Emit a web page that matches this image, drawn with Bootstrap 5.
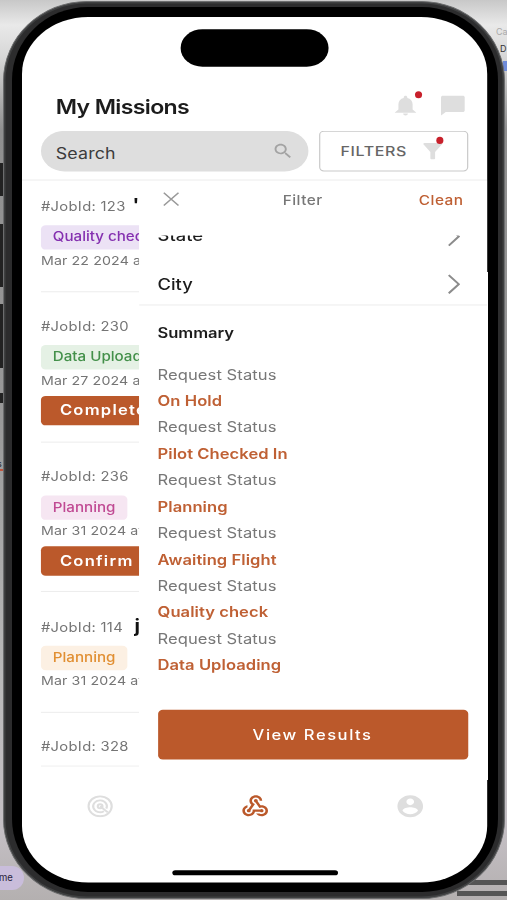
<!DOCTYPE html>
<html lang="en">
<head>
<meta charset="utf-8">
<meta name="viewport" content="width=device-width, initial-scale=1">
<title>My Missions</title>
<link href="https://cdn.jsdelivr.net/npm/bootstrap@5.3.0/dist/css/bootstrap.min.css" rel="stylesheet">
<style>
  body { width: 507px; height: 900px; overflow: hidden; font-family: Inter, "Liberation Sans", sans-serif; background: #a8a8a9; }
  svg { display: block; }
  /* desktop behind the phone */
  .desk { inset: 0; z-index: 0; background: linear-gradient(#c8c8c8 0, #e9e9e9 25px, #d5d5d5 60px, #8f8f8f 130px, #999 420px, #b9b9b9 680px, #c4bfc4 830px, #b4b0b0 900px); }
  .desk > * { position: absolute; }
  .blk { left: 0; width: 4px; background: #222; }
  .stripe { right: 0; width: 50px; height: 5px; background: #555; }
  .tagpill { left: -20px; top: 866px; width: 44px; height: 24px; border-radius: 12px; background: #c9bddb; color: #2c2540; font-size: 9.5px; line-height: 24px; padding-left: 19px; }
  .peek { font-size: 9px; line-height: 12px; }
  /* phone body */
  .shell { z-index: 1; width: 502px; height: 898px; margin: 1px 0 0 3px; padding: 5px 6px 6px 8px; border-radius: 84px / 80px; background: #2c2c2d; border: 1px solid #6c6d6e; box-shadow: inset 0 0 0 1.5px #3f4041; }
  .bezel { height: 100%; padding: 10px 0 0 10px; border-radius: 76px / 73px; background: #000; }
  /* 393x852 point screen stretched onto the phone */
  .screen { width: 393px; height: 852px; transform: scale(1.1837, 1.0158); transform-origin: 0 0; border-radius: 56px; background: #fff; overflow: hidden; position: relative; color: #1c1c1c; }
  .island { position: absolute; left: 134px; top: 11.5px; width: 125px; height: 37px; border-radius: 19px; background: #000; }
  .top-area { height: 160.5px; padding: 74px 16px 0; border-bottom: 1.5px solid #ececec; flex: none; }
  .title-row { height: 38px; padding: 0 1px 0 12.5px; }
  .title { font-size: 19.5px; font-weight: 600; line-height: 29px; letter-spacing: -.55px; }
  .search { width: 226px; height: 39.5px; border-radius: 20px; background: #dedede; color: #3b3b3b; font-size: 15px; padding: 4px 12px 0 12.5px; }
  .search span { letter-spacing: .15px; padding-top: 2px; }
  .filters { width: 126px; height: 39.5px; border: 1px solid #c9c9c9; border-radius: 4px; background: #fff; color: #666; font-size: 13.5px; font-weight: 500; letter-spacing: .55px; padding: 0 17px 0 17px; }
  .dot { position: absolute; width: 6px; height: 7px; border-radius: 50%; background: #c8202b; }
  .main-area { height: 577px; flex: none; overflow: hidden; }
  .jobs { width: 98.5px; padding-left: 16px; overflow: hidden; white-space: nowrap; margin-top: -8px; flex: none; }
  .job { border-bottom: 1.5px solid #ececec; padding-top: 24.3px; height: 118.3px; }
  .job.tall { height: 147.8px; }
  .jobid { font-size: 12.5px; line-height: 20px; height: 20px; color: #757575; letter-spacing: .25px; }
  .jobname { display: inline-block; line-height: 16px; vertical-align: baseline; color: #111; font-weight: 700; font-size: 17px; margin-left: 2px; }
  .state { display: table; margin-top: 8.3px; height: 24px; line-height: 24px; padding: 0 10px; border-radius: 4px; font-size: 12.8px; font-weight: 500; }
  .when { font-size: 12px; line-height: 21px; color: #757575; letter-spacing: .1px; }
  .act { display: block; width: 150px; height: 29px; margin-top: 4.5px; padding: 0 0 0 16px; border: 0; border-radius: 4px; background: #bb592b; color: #fff; font-size: 14px; line-height: 28px; font-weight: 600; letter-spacing: 1.05px; text-align: left; }
  .st-purple { background: #ece2f5; color: #8531b0; }
  .st-green { background: #e5f1e5; color: #43904a; }
  .st-pink { background: #f6e6f2; color: #c04a93; }
  .st-amber { background: #fcf0e3; color: #e18f33; }
  .panel { flex: 1; min-width: 0; background: #fff; }
  .panel-head { height: 54.3px; padding: 8.5px 20px 0 20.5px; font-size: 13px; font-weight: 500; letter-spacing: .4px; }
  .panel-head > * { height: 23px; line-height: 23px; }
  .orange { color: #bf6034; }
  .panel-scroll { height: 69.200px; overflow: hidden; border-bottom: 1.5px solid #ececec; }
  .opt { height: 47.5px; padding: 0 23.5px 0 16px; font-size: 15.5px; font-weight: 500; color: #1c1c1c; }
  .opt svg { margin-top: -1px; }
  .opt:first-child { margin-top: -22.5px; }
  .summary { padding: 15.5px 16px 0; font-size: 14px; line-height: 26px; color: #777; }
  .summary h2 { font-size: 14px; line-height: 24px; font-weight: 600; color: #1c1c1c; margin: 0 0 15.8px; letter-spacing: -.05px; }
  .summary dt { font-weight: 400; letter-spacing: .06px; }
  .summary dd { font-weight: 600; margin: 0; letter-spacing: .04px; }
  .go { height: 49.5px; margin: auto 16.5px 6.5px 16px; border: 0; border-radius: 4px; background: #bb592b; color: #fff; font-size: 14px; font-weight: 500; letter-spacing: 1.3px; flex: none; }
  .tabs { height: 78px; }
  .homebar { width: 140px; height: 5px; border-radius: 3px; background: #000; margin: 24px auto 0; }
</style>
<script src="https://cdn.jsdelivr.net/npm/bootstrap@5.3.0/dist/js/bootstrap.bundle.min.js"></script>
</head>
<body>
<div class="desk position-absolute overflow-hidden">
  <i class="blk" style="top:163px;height:33px"></i>
  <i class="blk" style="top:224px;height:63px"></i>
  <i class="blk" style="top:304px;height:64px"></i>
  <i class="blk" style="top:393px;height:10px"></i>
  <span class="peek" style="left:-3px;top:458px">s</span>
  <i style="left:0;top:469px;width:3px;height:2px;background:#c0563f"></i>
  <span class="tagpill">me</span>
  <span class="peek" style="left:496px;top:26px;color:#aaa">Ca</span>
  <span class="peek" style="left:500px;top:43px;color:#333">D</span>
  <i style="left:503px;top:61px;width:4px;height:10px;background:#6f8bd8"></i>
  <i class="stripe" style="top:880px"></i>
  <i class="stripe" style="top:891px"></i>
</div>

<div class="shell position-relative">
  <div class="bezel">
    <div class="screen d-flex flex-column">
      <div class="island"></div>

      <header class="top-area">
        <div class="title-row d-flex justify-content-between align-items-start">
          <h1 class="title mb-0">My Missions</h1>
          <div class="d-flex">
            <span class="position-relative me-3" style="margin-top:1px">
              <svg width="24" height="24" viewBox="0 0 24 24" fill="#dedede"><path d="M12 22c1.1 0 2-.9 2-2h-4c0 1.100.9 2 2 2zm6-6v-5c0-3.070-1.630-5.640-4.500-6.320V4c0-.83-.67-1.500-1.500-1.500S10.500 3.170 10.500 4v.68C7.640 5.360 6 7.920 6 11v5l-3 3v.3h18V19z"/></svg>
              <span class="dot" style="left:19.500px;top:-2.500px"></span>
            </span>
            <svg style="margin-top:1px" width="24" height="24" viewBox="0 0 24 24" fill="#dedede"><path d="M20.500 2.500h-17c-.83 0-1.500.67-1.500 1.500v18l4-3.500h14.500c.83 0 1.500-.67 1.500-1.500V4c0-.83-.67-1.500-1.500-1.500z"/></svg>
          </div>
        </div>
        <div class="d-flex justify-content-between">
          <div class="search d-flex justify-content-between align-items-center">
            <span>Search</span>
            <svg style="margin-top:-3px" width="19" height="20" viewBox="0 0 24 24" fill="#a3a3a3"><path d="M15.500 14h-.79l-.28-.27C15.410 12.590 16 11.110 16 9.500 16 5.910 13.090 3 9.500 3S3 5.910 3 9.500 5.910 16 9.500 16c1.610 0 3.090-.59 4.230-1.570l.27.28v.79l5 4.990L20.490 19l-4.990-5zm-6 0C7.010 14 5 11.990 5 9.500S7.010 5 9.500 5 14 7.010 14 9.500 11.990 14 9.500 14z"/></svg>
          </div>
          <button class="filters d-flex justify-content-between align-items-center">
            <span>FILTERS</span>
            <span class="position-relative">
              <svg width="24" height="24" viewBox="0 0 24 24" fill="#dedede"><path d="M4.250 5.610C6.270 8.200 10 13 10 13v6c0 .55.45 1 1 1h2c.55 0 1-.45 1-1v-6s3.720-4.800 5.740-7.390c.51-.66.04-1.610-.79-1.610H5.040c-.83 0-1.300.95-.79 1.610z"/></svg>
              <span class="dot" style="left:15px;top:-1.500px"></span>
            </span>
          </button>
        </div>
      </header>

      <main class="main-area d-flex">
        <section class="jobs">
          <article class="job">
            <div class="jobid">#JobId: 123 <span class="jobname">'</span></div>
            <span class="state st-purple">Quality check</span>
            <div class="when">Mar 22 2024 at</div>
          </article>
          <article class="job tall">
            <div class="jobid">#JobId: 230</div>
            <span class="state st-green">Data Uploading</span>
            <div class="when">Mar 27 2024 at</div>
            <button class="act">Complete</button>
          </article>
          <article class="job tall">
            <div class="jobid">#JobId: 236</div>
            <span class="state st-pink">Planning</span>
            <div class="when">Mar 31 2024 at</div>
            <button class="act">Confirm</button>
          </article>
          <article class="job">
            <div class="jobid">#JobId: 114 <span class="jobname ps-1">j</span></div>
            <span class="state st-amber">Planning</span>
            <div class="when">Mar 31 2024 at</div>
          </article>
          <article class="job" style="height:53px">
            <div class="jobid">#JobId: 328</div>
          </article>
        </section>

        <aside class="panel d-flex flex-column">
          <div class="panel-head d-flex justify-content-between">
            <svg width="14" height="23" viewBox="0 0 14 23" fill="none" stroke="#9a9a9a" stroke-width="1.300"><path d="M.8 4l12.400 12.500M13.200 4L.8 16.500"/></svg>
            <span style="color:#777;margin-left:6px">Filter</span>
            <span class="orange">Clean</span>
          </div>
          <div class="panel-scroll">
            <div class="opt d-flex justify-content-between align-items-center"><span>State</span>
              <svg width="10" height="20" viewBox="0 0 10 20" fill="none" stroke="#8c8c8c" stroke-width="1.800"><path d="M.5 1l8.500 9-8.500 9"/></svg></div>
            <div class="opt d-flex justify-content-between align-items-center"><span>City</span>
              <svg width="10" height="20" viewBox="0 0 10 20" fill="none" stroke="#8c8c8c" stroke-width="1.800"><path d="M.5 1l8.500 9-8.500 9"/></svg></div>
          </div>
          <div class="summary">
            <h2>Summary</h2>
            <dl class="mb-0">
              <dt>Request Status</dt><dd class="orange">On Hold</dd>
              <dt>Request Status</dt><dd class="orange">Pilot Checked In</dd>
              <dt>Request Status</dt><dd class="orange">Planning</dd>
              <dt>Request Status</dt><dd class="orange">Awaiting Flight</dd>
              <dt>Request Status</dt><dd class="orange">Quality check</dd>
              <dt>Request Status</dt><dd class="orange">Data Uploading</dd>
            </dl>
          </div>
          <button class="go">View Results</button>
        </aside>
      </main>

      <nav class="tabs row g-0 text-center align-items-center">
        <div class="col d-flex justify-content-center">
          <svg width="22" height="22" viewBox="0 0 22 22" fill="none" stroke="#dedede" stroke-width="1.800"><circle cx="11" cy="11" r="9.800"/><path d="M14.200 15.800a5.800 5.800 0 1 1 2-2.400M11 11l6.500 6"/><circle cx="11" cy="11" r="2"/></svg>
        </div>
        <div class="col d-flex justify-content-center">
          <svg width="26" height="26" viewBox="0 0 24 24" fill="#bb592b"><path d="M10 15h5.880c.27-.31.67-.5 1.120-.5.83 0 1.500.67 1.500 1.500s-.67 1.500-1.500 1.500c-.44 0-.84-.19-1.120-.5H11.900c-.46 2.280-2.480 4-4.900 4-2.760 0-5-2.240-5-5 0-2.420 1.720-4.440 4-4.900v2.070c-1.160.41-2 1.530-2 2.830 0 1.650 1.350 3 3 3s3-1.350 3-3v-1zm2.500-11c1.650 0 3 1.350 3 3h2c0-2.760-2.240-5-5-5s-5 2.240-5 5c0 1.430.6 2.710 1.550 3.620l-2.350 3.900c-.68.14-1.200.75-1.200 1.480 0 .83.67 1.500 1.500 1.500s1.500-.67 1.500-1.500c0-.16-.02-.31-.07-.45l3.380-5.630C10.490 9.610 9.500 8.420 9.500 7c0-1.650 1.350-3 3-3zm4.500 9c-.64 0-1.230.2-1.720.54l-3.050-5.070C11.530 8.350 11 7.740 11 7c0-.83.67-1.500 1.500-1.500S14 6.170 14 7c0 .15-.02.29-.06.43l2.190 3.650c.28-.05.57-.08.87-.08 2.760 0 5 2.240 5 5s-2.240 5-5 5c-1.850 0-3.470-1.010-4.330-2.500h2.670c.48.32 1.050.5 1.660.5 1.650 0 3-1.350 3-3s-1.350-3-3-3z"/></svg>
        </div>
        <div class="col d-flex justify-content-center">
          <svg width="26" height="26" viewBox="0 0 24 24" fill="#dedede"><path d="M12 2C6.480 2 2 6.480 2 12s4.480 10 10 10 10-4.480 10-10S17.520 2 12 2zm0 3c1.660 0 3 1.340 3 3s-1.340 3-3 3-3-1.340-3-3 1.340-3 3-3zm0 14.200c-2.500 0-4.710-1.280-6-3.220.03-1.990 4-3.080 6-3.080 1.990 0 5.970 1.090 6 3.080-1.290 1.940-3.500 3.220-6 3.220z"/></svg>
        </div>
      </nav>
      <div class="homebar flex-shrink-0"></div>
    </div>
  </div>
</div>
</body>
</html>
